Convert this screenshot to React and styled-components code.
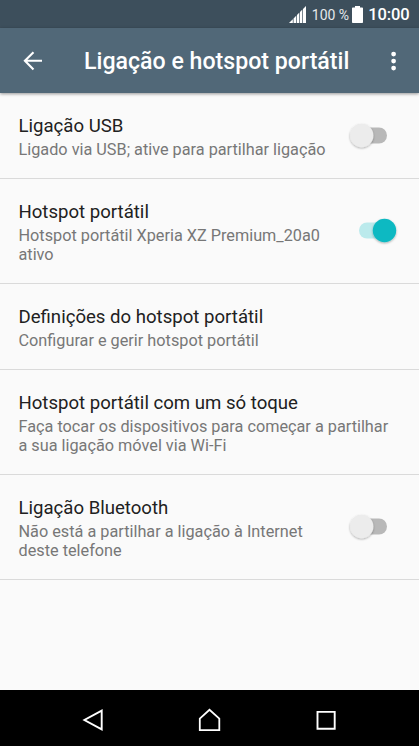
import React from "react";
import styled, { createGlobalStyle } from "styled-components";

const Global = createGlobalStyle`
  *{box-sizing:border-box}
  body{margin:0;font-family:Roboto,sans-serif;background:#fafafa}
`;
const Screen = styled.div`width:419px;height:746px;display:flex;flex-direction:column;background:#fafafa;overflow:hidden;`;
const StatusBar = styled.div`
  height:28px;flex:none;background:#3d4f5c;color:#fff;display:flex;align-items:center;justify-content:flex-end;padding:0 9.5px 0 0;
`;
const Percent = styled.span`font-size:14px;line-height:20px;margin:2px 3px 0 6px;white-space:nowrap;color:#e4e8eb;`;
const Clock = styled.span`font-size:16.5px;line-height:20px;font-weight:500;margin:2px 0 0 5px;letter-spacing:-.1px;`;
const AppBar = styled.header`
  height:65px;flex:none;background:#516878;color:#fff;display:flex;align-items:center;padding:0 14px 0 20px;
  box-shadow:0 1px 3px rgba(0,0,0,.4);z-index:1;
`;
const Title = styled.h1`margin:2px 0 0 38px;flex:1;font-size:23.15px;line-height:30px;font-weight:500;white-space:nowrap;`;
const List = styled.main`flex:1;`;
const Row = styled.section`
  height:${p => p.$h}px;border-bottom:1px solid #dadada;display:flex;align-items:center;padding:0 18px 0 18.5px;justify-content:space-between;
`;
const Copy = styled.div`white-space:nowrap;align-self:flex-start;padding-top:21px;`;
const Name = styled.h2`margin:0;font-size:18.6px;line-height:24px;font-weight:400;color:#212121;`;
const Detail = styled.p`margin:2px 0 0;font-size:16.25px;line-height:19px;color:#777;white-space:pre-line;`;
const NavBar = styled.nav`height:56px;flex:none;background:#000;display:flex;align-items:center;justify-content:space-between;padding:4px 81px 0 81px;`;
const Switch = styled.svg`flex:none;`;

const Toggle = ({ on }) => (
  <Switch width="54" height="34" viewBox="0 0 54 34">
    <defs>
      <filter id="thumb-shadow" x="-30%" y="-30%" width="160%" height="170%">
        <feDropShadow dx="0" dy="1" stdDeviation=".8" floodOpacity=".32" />
      </filter>
    </defs>
    <rect x="12" y="8.5" width="28" height="16" rx="8" fill={on ? "#bbeaec" : "#b8b8b8"} />
    <circle cx={on ? 37.5 : 14.7} cy="16.5" r="11.7" fill={on ? "#0eb9c2" : "#ececec"} filter="url(#thumb-shadow)" />
  </Switch>
);

const rows = [
  [86, "Ligação USB", "Ligado via USB; ative para partilhar ligação", false],
  [105, "Hotspot portátil", "Hotspot portátil Xperia XZ Premium_20a0\nativo", true],
  [86, "Definições do hotspot portátil", "Configurar e gerir hotspot portátil"],
  [105, "Hotspot portátil com um só toque", "Faça tocar os dispositivos para começar a partilhar\na sua ligação móvel via Wi-Fi"],
  [105, "Ligação Bluetooth", "Não está a partilhar a ligação à Internet\ndeste telefone", false],
];

export default function App() {
  return (
    <Screen>
      <Global />
      <StatusBar>
        <svg width="17" height="17" viewBox="0 0 17 17" fill="#fff">
          <path d="M0 17L3.8 13.2V17ZM4.6 17V12.4L7.2 9.8V17ZM8 17V9L10.2 6.8V17ZM11 17V6L13.2 3.8V17ZM14 17V3L17 0V17Z" />
          <path d="M0 17L17 0V17Z" opacity=".15" />
        </svg>
        <Percent>100 %</Percent>
        <svg width="11" height="17" viewBox="0 0 11 17" fill="#fff"><path d="M3 0h5v1.5h2.2q.8 0 .8.8v13.9q0 .8-.8.8H.8q-.8 0-.8-.8V2.3q0-.8.8-.8H3z" /></svg>
        <Clock>10:00</Clock>
      </StatusBar>
      <AppBar>
        <svg width="26" height="26" viewBox="0 0 26 26" fill="none" stroke="#fff" strokeWidth="2.1"><path d="M22 12.8H5M13.5 4.2L4.9 12.8L13.5 21.4" /></svg>
        <Title>Ligação e hotspot portátil</Title>
        <svg width="24" height="26" viewBox="0 0 24 26" fill="#fff"><circle cx="12.6" cy="6.1" r="2.4" /><circle cx="12.6" cy="13.1" r="2.4" /><circle cx="12.6" cy="20.1" r="2.4" /></svg>
      </AppBar>
      <List>
        {rows.map(([h, name, detail, on]) => (
          <Row key={name} $h={h}>
            <Copy><Name>{name}</Name><Detail>{detail}</Detail></Copy>
            {on !== undefined && <Toggle on={on} />}
          </Row>
        ))}
      </List>
      <NavBar>
        <svg width="24" height="24" viewBox="0 0 24 24" fill="none" stroke="#fff" strokeWidth="1.9"><path d="M20.7 2.7V21.3L3.4 12Z" /></svg>
        <svg width="24" height="24" viewBox="0 0 24 24" fill="none" stroke="#fff" strokeWidth="1.8"><path d="M1.8 10.6L11.5 1.8l9.8 8.8v11.5H1.8z" /></svg>
        <svg width="24" height="24" viewBox="0 0 24 24" fill="none" stroke="#fff" strokeWidth="1.9"><path d="M3.5 3.9h17.2v16.9H3.5z" /></svg>
      </NavBar>
    </Screen>
  );
}
